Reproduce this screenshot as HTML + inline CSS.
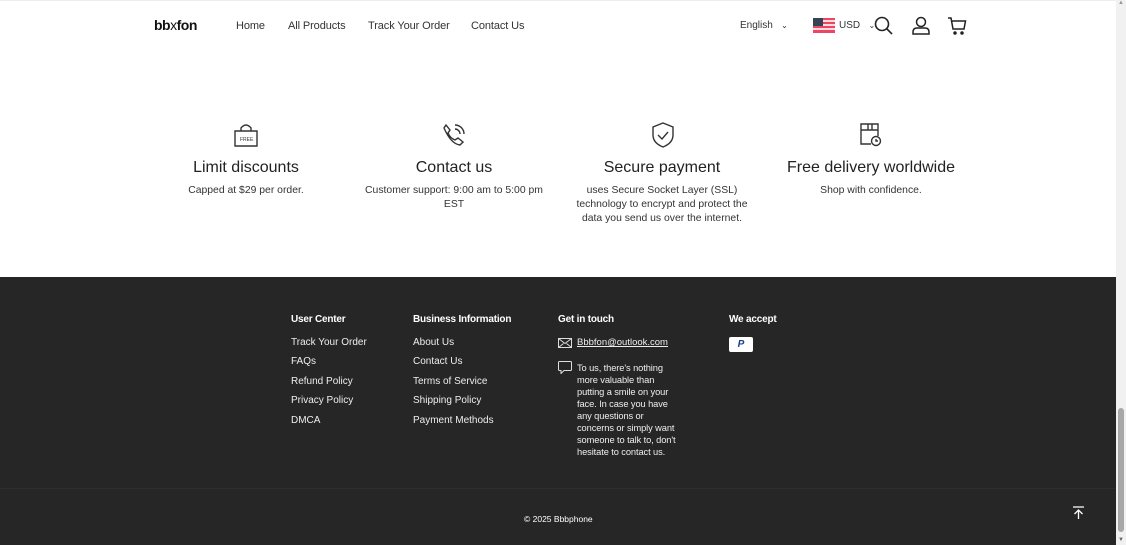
<!DOCTYPE html>
<html><head><meta charset="utf-8"><style>
*{margin:0;padding:0;box-sizing:border-box}
body{width:1126px;height:545px;overflow:hidden;background:#fff;font-family:"Liberation Sans",sans-serif;color:#222;position:relative}
.a{position:absolute;white-space:nowrap}
.nav{font-size:11px;color:#333;top:20px;letter-spacing:-0.1px}
.feat{text-align:center;position:absolute;width:220px}
.feat h3{font-weight:normal;font-size:16px;color:#222;margin-bottom:7px}
.feat p{font-size:10.4px;line-height:14px;color:#333}
.foot{position:absolute;left:0;top:277px;width:1116px;height:268px;background:#262626;color:#fff}
.foot .h{font-weight:bold;font-size:10px;letter-spacing:-0.2px}
.foot .l{font-size:10px;color:#eee}
.sb{position:absolute;left:1116px;top:0;width:10px;height:545px;background:#f1f1f1}
</style></head><body>
<div style="position:absolute;left:0;top:0;width:1116px;height:1px;background:#eee"></div>
<div class="a" style="left:154px;top:17px;font-size:14px;font-weight:bold;letter-spacing:-0.5px;color:#111">bb<span style="font-weight:normal">x</span>fon</div>
<div class="a nav" style="left:236px">Home</div>
<div class="a nav" style="left:288px">All Products</div>
<div class="a nav" style="left:368px">Track Your Order</div>
<div class="a nav" style="left:471px">Contact Us</div>
<div class="a" style="left:740px;top:20px;font-size:10px;color:#333">English &nbsp;&nbsp;<span style="font-size:8px">⌄</span></div>
<svg class="a" style="left:813px;top:18px" width="22" height="15"><rect width="22" height="15" fill="#e46"/><rect y="2" width="22" height="2" fill="#fdd"/><rect y="6" width="22" height="2" fill="#fdd"/><rect y="10" width="22" height="2" fill="#fdd"/><rect width="10" height="8" fill="#345"/></svg>
<div class="a" style="left:839px;top:20px;font-size:10px;color:#333">USD &nbsp;&nbsp;<span style="font-size:8px">⌄</span></div>
<svg class="a" style="left:874px;top:16px" width="20" height="20" fill="none" stroke="#222" stroke-width="1.6"><circle cx="8" cy="8" r="6.5"/><path d="M13 13l5 5"/></svg>
<svg class="a" style="left:911px;top:16px" width="20" height="20" fill="none" stroke="#222" stroke-width="1.5"><circle cx="10" cy="6" r="4.5"/><path d="M2 18v-2q0-4 4-4h8q4 0 4 4v2z"/></svg>
<svg class="a" style="left:947px;top:16px" width="20" height="20" fill="none" stroke="#222" stroke-width="1.5"><path d="M1 2h3l2 11h11l1.5-8H5"/><circle cx="8" cy="17" r="1" fill="#222"/><circle cx="15" cy="17" r="1" fill="#222"/></svg>

<svg class="a" style="left:233px;top:122px" width="26" height="26" fill="none" stroke="#333" stroke-width="1.4"><path d="M2 9h22v15H2z"/><path d="M8 9V6q5-6 10 0v3"/><text x="7" y="19" font-size="5" fill="#333" stroke="none" font-family="Liberation Sans">FREE</text></svg>
<svg class="a" style="left:441px;top:122px" width="26" height="26" fill="none" stroke="#333" stroke-width="1.4"><path d="M5 3l4 5-2 3q2 5 7 7l3-2 5 4-3 3Q10 22 3 6z"/><path d="M14 7a5 5 0 0 1 5 5M14 3a9 9 0 0 1 9 9"/></svg>
<svg class="a" style="left:650px;top:121px" width="26" height="28" fill="none" stroke="#333" stroke-width="1.4"><path d="M13 2l10 4v8q0 8-10 12Q3 22 3 14V6z"/><path d="M8 14l4 4 6-7"/></svg>
<svg class="a" style="left:858px;top:122px" width="26" height="26" fill="none" stroke="#333" stroke-width="1.4"><path d="M3 2h17v6H3zM3 8v14h10M20 8v6M10 2v6h4V2M3 8h17"/><circle cx="18" cy="19" r="4.5"/><path d="M18 17v2h2"/></svg>

<div class="feat" style="left:136px;top:159px"><h3>Limit discounts</h3><p>Capped at $29 per order.</p></div>
<div class="feat" style="left:344px;top:159px"><h3>Contact us</h3><p>Customer support: 9:00 am to 5:00 pm<br>EST</p></div>
<div class="feat" style="left:552px;top:159px"><h3>Secure payment</h3><p>uses Secure Socket Layer (SSL)<br>technology to encrypt and protect the<br>data you send us over the internet.</p></div>
<div class="feat" style="left:761px;top:159px"><h3>Free delivery worldwide</h3><p>Shop with confidence.</p></div>

<div class="foot">
<div class="a h" style="left:291px;top:37px">User Center</div>
<div class="a l" style="left:291px;top:60px">Track Your Order</div>
<div class="a l" style="left:291px;top:79px">FAQs</div>
<div class="a l" style="left:291px;top:99px">Refund Policy</div>
<div class="a l" style="left:291px;top:118px">Privacy Policy</div>
<div class="a l" style="left:291px;top:138px">DMCA</div>
<div class="a h" style="left:413px;top:37px">Business Information</div>
<div class="a l" style="left:413px;top:60px">About Us</div>
<div class="a l" style="left:413px;top:79px">Contact Us</div>
<div class="a l" style="left:413px;top:99px">Terms of Service</div>
<div class="a l" style="left:413px;top:118px">Shipping Policy</div>
<div class="a l" style="left:413px;top:138px">Payment Methods</div>
<div class="a h" style="left:558px;top:37px">Get in touch</div>
<svg class="a" style="left:558px;top:61px" width="14" height="10" fill="none" stroke="#ddd"><path d="M.5.5h13v9H.5zM.5.5l6.5 5 6.5-5M.5 9.5l5-4M13.5 9.5l-5-4"/></svg>
<div class="a l" style="left:577px;top:60px;font-size:9.5px;text-decoration:underline">Bbbfon@outlook.com</div>
<svg class="a" style="left:558px;top:84px" width="14" height="13" fill="none" stroke="#ddd"><path d="M1.5.5h11q1 0 1 1v7q0 1-1 1H6l-3 3v-3H1.5q-1 0-1-1v-7q0-1 1-1z"/></svg>
<div class="a l" style="left:577px;top:85px;font-size:9.3px;line-height:12px;white-space:normal;width:104px;letter-spacing:-0.1px">To us, there's nothing more valuable than putting a smile on your face. In case you have any questions or concerns or simply want someone to talk to, don't hesitate to contact us.</div>
<div class="a h" style="left:729px;top:37px">We accept</div>
<div class="a" style="left:729px;top:60px;width:24px;height:15px;background:#fff;border-radius:2px;color:#1a3d8f;font-weight:bold;font-size:10px;text-align:center;line-height:15px;font-style:italic">P</div>
<div class="a" style="left:0;top:211px;width:1116px;height:1px;background:#2e2e2e"></div>
<div class="a" style="left:524px;top:237px;font-size:8.5px">© 2025 Bbbphone</div>
<svg class="a" style="left:1072px;top:229px" width="13" height="14" fill="none" stroke="#fff" stroke-width="1.3"><path d="M1 1h11M6.5 13V4M2.5 8l4-4 4 4"/></svg>
</div>
<div class="sb"><div style="position:absolute;left:2px;top:408px;width:6px;height:124px;background:#a8a8a8;border-radius:3px"></div><div style="position:absolute;left:2px;top:537px;font-size:6px;color:#666">▼</div><div style="position:absolute;left:2px;top:0;font-size:6px;color:#999">▲</div></div>
</body></html>
